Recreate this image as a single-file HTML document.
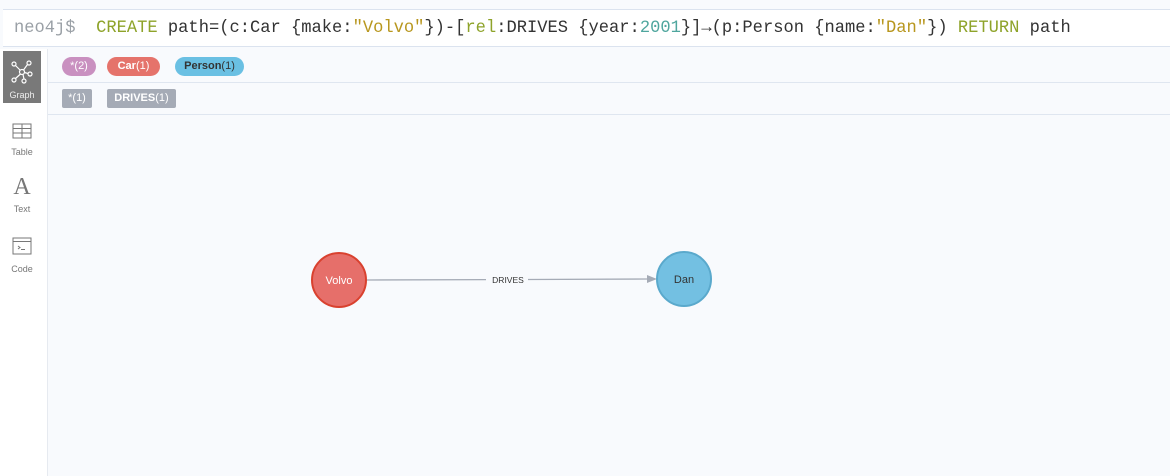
<!DOCTYPE html>
<html><head><meta charset="utf-8"><style>
body{margin:0;width:1170px;height:476px;background:#f8fafd;font-family:"Liberation Sans",sans-serif;overflow:hidden;position:relative}
.code{position:absolute;left:3px;top:9px;width:1167px;height:38px;background:#fff;border-top:1px solid #dbe3ef;border-bottom:1px solid #dbe3ef;font-family:"Liberation Mono",monospace;font-size:17.1px;line-height:38px;color:#333;white-space:pre;box-sizing:border-box;padding-left:11px}
.side{position:absolute;left:0;top:49px;width:47px;height:427px;background:#fff;border-right:1px solid #e6eaf0}
.tab{position:absolute;left:3px;width:38px;height:52px;text-align:center;font-size:9px;color:#777}
.tab span{position:absolute;left:0;right:0;top:39px}
.pill{position:absolute;height:19px;line-height:19px;font-size:11px;color:#fff;box-sizing:border-box;text-align:center;white-space:nowrap}
.pill b{font-weight:bold}
.hl{position:absolute;left:48px;right:0;height:1px;background:#dfe6f0}
</style></head><body>
<div class="code"><span style="color:#9aa0a6">neo4j$</span>  <span style="color:#8ea32a">CREATE</span> path=(c:Car {make:<span style="color:#b8971f">"Volvo"</span>})-[<span style="color:#8ea32a">rel</span>:DRIVES {year:<span style="color:#4fa69e">2001</span>}]→(p:Person {name:<span style="color:#b8971f">"Dan"</span>}) <span style="color:#8ea32a">RETURN</span> path</div>
<div class="side">
 <div class="tab" style="top:2px;background:#797979;color:#eee"><svg width="24" height="24" viewBox="0 0 24 24" style="margin-top:9px" fill="none" stroke="#fff" stroke-width="1.2"><circle cx="4" cy="4" r="2"/><circle cx="19" cy="3" r="2"/><circle cx="12" cy="12" r="2.5"/><circle cx="4" cy="20" r="2"/><circle cx="14" cy="21" r="2"/><circle cx="20" cy="14" r="2"/><path d="M5.5 5.5l5 5M17.5 4.5l-4 5.5M10.5 14l-5 4.5M13 14.5l1 4.5M14.5 12.5l3.5 1"/></svg><span style="color:#eee">Graph</span></div>
 <div class="tab" style="top:62px"><svg width="20" height="16" viewBox="0 0 20 16" style="margin-top:12px" fill="none" stroke="#777"><rect x="1" y="1" width="18" height="14"/><path d="M1 5.5h18M1 10h18M10 1v14"/></svg><span style="top:36px">Table</span></div>
 <div class="tab" style="top:120px"><div style="font-family:'Liberation Serif',serif;font-size:24px;color:#777;margin-top:6px;line-height:24px">A</div><span style="top:35px">Text</span></div>
 <div class="tab" style="top:180px"><svg width="20" height="18" viewBox="0 0 20 18" style="margin-top:8px" fill="none" stroke="#777"><rect x="1" y="1" width="18" height="16"/><path d="M1 4.5h18M6 9l2 1.5-2 1.5M9 12.5h4"/></svg><span style="top:35px">Code</span></div>
</div>
<div class="hl" style="top:82px"></div>
<div class="hl" style="top:114px"></div>
<div class="pill" style="left:62px;top:57px;width:34px;background:#c990c0;border-radius:10px">*(2)</div>
<div class="pill" style="left:107px;top:57px;width:53px;background:#e5736b;border-radius:10px"><b>Car</b>(1)</div>
<div class="pill" style="left:175px;top:57px;width:69px;background:#6ac0e3;color:#333;border-radius:10px"><b>Person</b>(1)</div>
<div class="pill" style="left:62px;top:89px;width:30px;background:#a5abb6;border-radius:2px">*(1)</div>
<div class="pill" style="left:107px;top:89px;width:69px;background:#a5abb6;border-radius:2px"><b>DRIVES</b>(1)</div>
<svg style="position:absolute;left:0;top:0" width="1170" height="476">
<line x1="367" y1="280" x2="486" y2="279.6" stroke="#a5abb6" stroke-width="1.3"/>
<line x1="528" y1="279.5" x2="648" y2="279" stroke="#a5abb6" stroke-width="1.3"/>
<path d="M657 279l-10 -4v8z" fill="#a5abb6"/>
<text x="508" y="283" font-size="8.5" fill="#333" text-anchor="middle" font-family="Liberation Sans">DRIVES</text>
<circle cx="339" cy="280" r="27" fill="#e66f6a" stroke="#d9412f" stroke-width="2"/>
<text x="339" y="284" font-size="11" fill="#fff" text-anchor="middle" font-family="Liberation Sans">Volvo</text>
<circle cx="684" cy="279" r="27" fill="#73c0e2" stroke="#5aa9cc" stroke-width="2"/>
<text x="684" y="283" font-size="11" fill="#333" text-anchor="middle" font-family="Liberation Sans">Dan</text>
</svg>
</body></html>
